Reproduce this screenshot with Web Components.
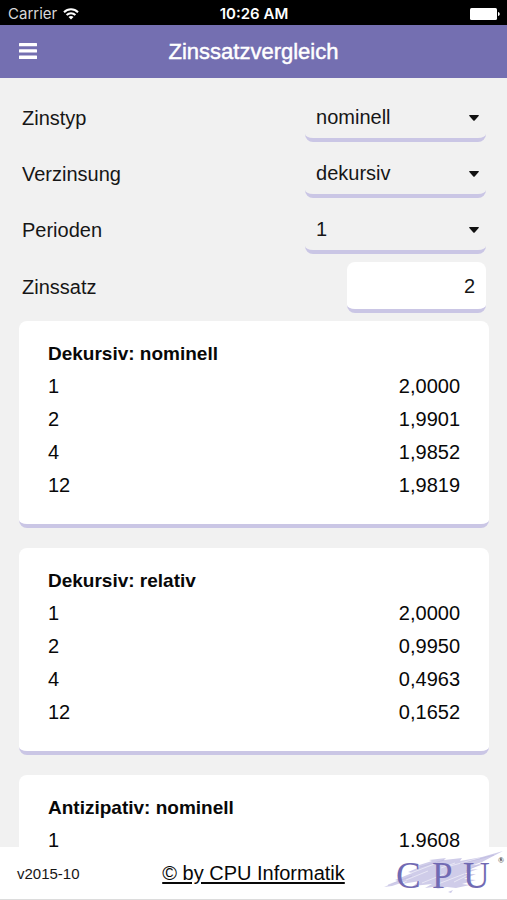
<!DOCTYPE html>
<html lang="de">
<head>
  <meta charset="utf-8">
  <meta name="viewport" content="width=device-width, initial-scale=1">
  <title>Zinssatzvergleich</title>
  <style>
    body {
      margin: 0;
      background: #f1f1f1;
      color: #161616;
      font-family: "Liberation Sans", Arial, sans-serif;
      font-size: 20px;
    }
  </style>
</head>
<body>
  <interest-app></interest-app>

  <script>
    class StatusBar extends HTMLElement {
      constructor () {
        super()
        this.shadow = this.attachShadow({ mode: 'open' })
      }

      connectedCallback () {
        this.render()
      }

      render () {
        this.shadow.innerHTML =
        /* html */`
        <style>
          :host {
            display: grid;
            grid-template-columns: 1fr auto 1fr;
            align-items: center;
            height: 25px;
            padding: 2px 7px 0 8px;
            box-sizing: border-box;
            background: #000;
            color: #fff;
            font-family: Inter, "Liberation Sans", sans-serif;
            font-size: 15px;
            line-height: 20px;
          }
          .carrier {
            display: flex;
            align-items: center;
            gap: 6px;
            color: #d8d8d8;
          }
          .time {
            font-size: 15px;
            font-weight: 600;
          }
          .battery {
            justify-self: end;
          }
          svg {
            display: block;
          }
        </style>

        <div class="carrier">
          <span>Carrier</span>
          <svg width="16" height="12" viewBox="0 0 16 12" fill="none" stroke="#fff" stroke-width="2" aria-hidden="true">
            <path d="M1 4.300C5 .3 11 .3 15 4.300"/>
            <path d="M3.600 7C6.100 4.500 9.900 4.500 12.400 7"/>
            <path d="M8 11.500L5.500 9C7 7.700 9 7.700 10.500 9Z" fill="#fff" stroke="none"/>
          </svg>
        </div>
        <span class="time">10:26 AM</span>
        <svg class="battery" width="30" height="12" viewBox="0 0 30 12" fill="#fff" aria-hidden="true">
          <rect width="27" height="12" rx="1.500"/>
          <path d="M28 4C30.300 4.600 30.300 7.400 28 8Z"/>
        </svg>
        `
      }
    }

    class AppHeader extends HTMLElement {
      constructor () {
        super()
        this.shadow = this.attachShadow({ mode: 'open' })
      }

      connectedCallback () {
        this.render()
      }

      render () {
        this.shadow.innerHTML =
        /* html */`
        <style>
          :host {
            display: grid;
            grid-template-columns: 56px 1fr 56px;
            align-items: center;
            height: 53px;
            background: #746fb1;
            color: #fff;
          }
          button {
            display: flex;
            align-items: center;
            justify-content: center;
            height: 48px;
            padding: 0 0 2px;
            border: 0;
            background: none;
            cursor: pointer;
          }
          h1 {
            margin: 0;
            text-align: center;
            font-size: 22px;
            font-weight: 400;
            line-height: 28px;
            -webkit-text-stroke: thin;
          }
        </style>

        <button type="button" aria-label="Menü">
          <svg width="18" height="16" viewBox="0 0 18 16" fill="#fff" aria-hidden="true">
            <rect width="18" height="3.300" rx=".5"/>
            <rect y="6.300" width="18" height="3.300" rx=".5"/>
            <rect y="12.600" width="18" height="3.300" rx=".5"/>
          </svg>
        </button>
        <h1><slot></slot></h1>
        `
      }
    }

    class SelectField extends HTMLElement {
      constructor () {
        super()
        this.shadow = this.attachShadow({ mode: 'open' })
      }

      connectedCallback () {
        this.render()
      }

      render () {
        const label = this.getAttribute('label')
        const options = this.getAttribute('options').split(',')

        this.shadow.innerHTML =
        /* html */`
        <style>
          :host {
            display: flex;
            align-items: center;
            justify-content: space-between;
            height: 56px;
          }
          .control {
            display: grid;
            align-items: center;
            width: 39%;
          }
          select, svg {
            grid-area: 1 / 1;
          }
          select {
            appearance: none;
            width: 100%;
            height: 48px;
            padding: 2px 28px 0 11px;
            border: 0 solid #cac6e5;
            border-bottom-width: 4px;
            border-radius: 8px;
            background: transparent;
            color: inherit;
            font: inherit;
          }
          svg {
            justify-self: end;
            margin-right: 7px;
            pointer-events: none;
          }
        </style>

        <label for="field">${label}</label>
        <div class="control">
          <select id="field"></select>
          <svg width="10" height="6" viewBox="0 0 10 6" fill="#111" aria-hidden="true">
            <path d="M.7 0H9.300Q10.300 .3 9.600 1.100L5.700 5.500Q5 6.100 4.300 5.500L.4 1.100Q-.3 .3 .7 0Z"/>
          </svg>
        </div>
        `

        const select = this.shadow.querySelector('select')

        options.forEach(text => {
          const option = document.createElement('option')
          option.textContent = text
          select.appendChild(option)
        })
      }
    }

    class NumberField extends HTMLElement {
      constructor () {
        super()
        this.shadow = this.attachShadow({ mode: 'open' })
      }

      connectedCallback () {
        this.render()
      }

      render () {
        this.shadow.innerHTML =
        /* html */`
        <style>
          :host {
            display: flex;
            align-items: center;
            justify-content: space-between;
            height: 58px;
          }
          input {
            box-sizing: border-box;
            width: 30%;
            height: 51px;
            padding: 2px 11px 0;
            border: 0 solid #cac6e5;
            border-bottom-width: 4px;
            border-radius: 8px;
            background: #fff;
            color: inherit;
            font: inherit;
            text-align: right;
          }
        </style>

        <label for="field">${this.getAttribute('label')}</label>
        <input id="field" type="text" inputmode="decimal" value="${this.getAttribute('value')}">
        `
      }
    }

    class RateCard extends HTMLElement {
      constructor () {
        super()
        this.shadow = this.attachShadow({ mode: 'open' })
        this.rates = []
      }

      connectedCallback () {
        this.render()
      }

      render () {
        this.shadow.innerHTML =
        /* html */`
        <style>
          :host {
            display: block;
            padding: 16px 29px 22px;
            border: 0 solid #cac6e5;
            border-bottom-width: 4px;
            border-radius: 8px;
            background: #fff;
            color: #080808;
          }
          table {
            width: 100%;
            border-collapse: collapse;
            line-height: 33px;
          }
          caption {
            font-size: 19px;
            font-weight: 700;
            text-align: left;
          }
          th, td {
            padding: 0;
            font-weight: 400;
            text-align: left;
          }
          td {
            text-align: right;
          }
        </style>

        <table>
          <caption><slot></slot></caption>
          <tbody></tbody>
        </table>
        `

        const body = this.shadow.querySelector('tbody')

        this.rates.forEach(({ period, rate }) => {
          const row = body.insertRow()
          const head = document.createElement('th')
          head.scope = 'row'
          head.textContent = period
          row.appendChild(head)
          row.insertCell().textContent = rate
        })
      }
    }

    class CpuLogo extends HTMLElement {
      constructor () {
        super()
        this.shadow = this.attachShadow({ mode: 'open' })
      }

      connectedCallback () {
        this.render()
      }

      render () {
        this.shadow.innerHTML =
        /* html */`
        <style>
          :host {
            display: block;
          }
          svg {
            display: block;
          }
          text {
            font-family: "Liberation Serif", "Times New Roman", serif;
          }
        </style>

        <svg width="121" height="46" viewBox="0 0 121 46">
          <g fill="#cfcce9">
            <path d="M0 37L14 31L11 30L28 23L24 22L36 17L32 16L48 11L45 10L62 8L60 10L78 8L76 11L98 7L119 1L98 12L89 15L100 14L83 20L94 19L80 24L92 24L80 29L92 30L78 34L86 35L72 38L63 37L52 39L58 36L41 38L48 34L29 36L36 31L18 34L23 31L8 36Z"/>
            <path d="M64 42L69 40L67 43Z"/>
          </g>
          <g fill="none" stroke="#fff" stroke-width="1">
            <path d="M22 30L44 21M38 33L60 24M27 23L53 13M54 34L80 24M66 16L96 8M70 32L88 23M57 18L71 13" opacity=".5"/>
          </g>
          <g fill="none" stroke="#b5b1db" stroke-width="1">
            <path d="M4 35L28 26M33 18L60 10M76 14L110 5M82 21L98 13" opacity=".5"/>
          </g>
          <text x="12 48 79" y="38" font-size="37" fill="#716ab3">CPU</text>
          <text x="114" y="13" font-size="8" font-weight="700" fill="#444">®</text>
        </svg>
        `
      }
    }

    class AppFooter extends HTMLElement {
      constructor () {
        super()
        this.shadow = this.attachShadow({ mode: 'open' })
      }

      connectedCallback () {
        this.render()
      }

      render () {
        this.shadow.innerHTML =
        /* html */`
        <style>
          :host {
            display: grid;
            grid-template-columns: 1fr auto 1fr;
            align-items: center;
            box-sizing: border-box;
            height: 53px;
            padding: 0 2px;
            border-bottom: 1px solid #dcdcdc;
            background: #fff;
          }
          .version {
            padding-left: 15px;
            font-size: 15px;
          }
          a {
            color: #080808;
            text-underline-offset: 2px;
          }
          cpu-logo {
            justify-self: end;
          }
        </style>

        <span class="version">v2015-10</span>
        <a href="#cpu">© by CPU Informatik</a>
        <cpu-logo></cpu-logo>
        `
      }
    }

    class InterestApp extends HTMLElement {
      constructor () {
        super()
        this.shadow = this.attachShadow({ mode: 'open' })
      }

      connectedCallback () {
        this.loadData()
        this.render()
      }

      loadData () {
        this.results = [
          {
            title: 'Dekursiv: nominell',
            rates: [
              { period: '1', rate: '2,0000' },
              { period: '2', rate: '1,9901' },
              { period: '4', rate: '1,9852' },
              { period: '12', rate: '1,9819' }
            ]
          },
          {
            title: 'Dekursiv: relativ',
            rates: [
              { period: '1', rate: '2,0000' },
              { period: '2', rate: '0,9950' },
              { period: '4', rate: '0,4963' },
              { period: '12', rate: '0,1652' }
            ]
          },
          {
            title: 'Antizipativ: nominell',
            rates: [
              { period: '1', rate: '1,9608' }
            ]
          }
        ]
      }

      render () {
        this.shadow.innerHTML =
        /* html */`
        <style>
          :host {
            display: flex;
            flex-direction: column;
            height: 100vh;
          }
          main {
            flex: 1;
            min-height: 0;
            overflow-y: auto;
            scrollbar-width: none;
          }
          form {
            padding: 12px 21px 5px 22px;
          }
          .results {
            display: grid;
            gap: 20px;
            padding: 0 18px 20px 19px;
          }
        </style>

        <status-bar></status-bar>
        <app-header>Zinssatzvergleich</app-header>
        <main>
          <form>
            <select-field label="Zinstyp" options="nominell,relativ"></select-field>
            <select-field label="Verzinsung" options="dekursiv,antizipativ"></select-field>
            <select-field label="Perioden" options="1,2,4,12"></select-field>
            <number-field label="Zinssatz" value="2"></number-field>
          </form>
          <div class="results"></div>
        </main>
        <app-footer></app-footer>
        `

        const results = this.shadow.querySelector('.results')

        this.results.forEach(result => {
          const card = document.createElement('rate-card')
          card.rates = result.rates
          card.textContent = result.title
          results.appendChild(card)
        })
      }
    }

    customElements.define('status-bar', StatusBar)
    customElements.define('app-header', AppHeader)
    customElements.define('select-field', SelectField)
    customElements.define('number-field', NumberField)
    customElements.define('rate-card', RateCard)
    customElements.define('cpu-logo', CpuLogo)
    customElements.define('app-footer', AppFooter)
    customElements.define('interest-app', InterestApp)
  </script>
</body>
</html>
